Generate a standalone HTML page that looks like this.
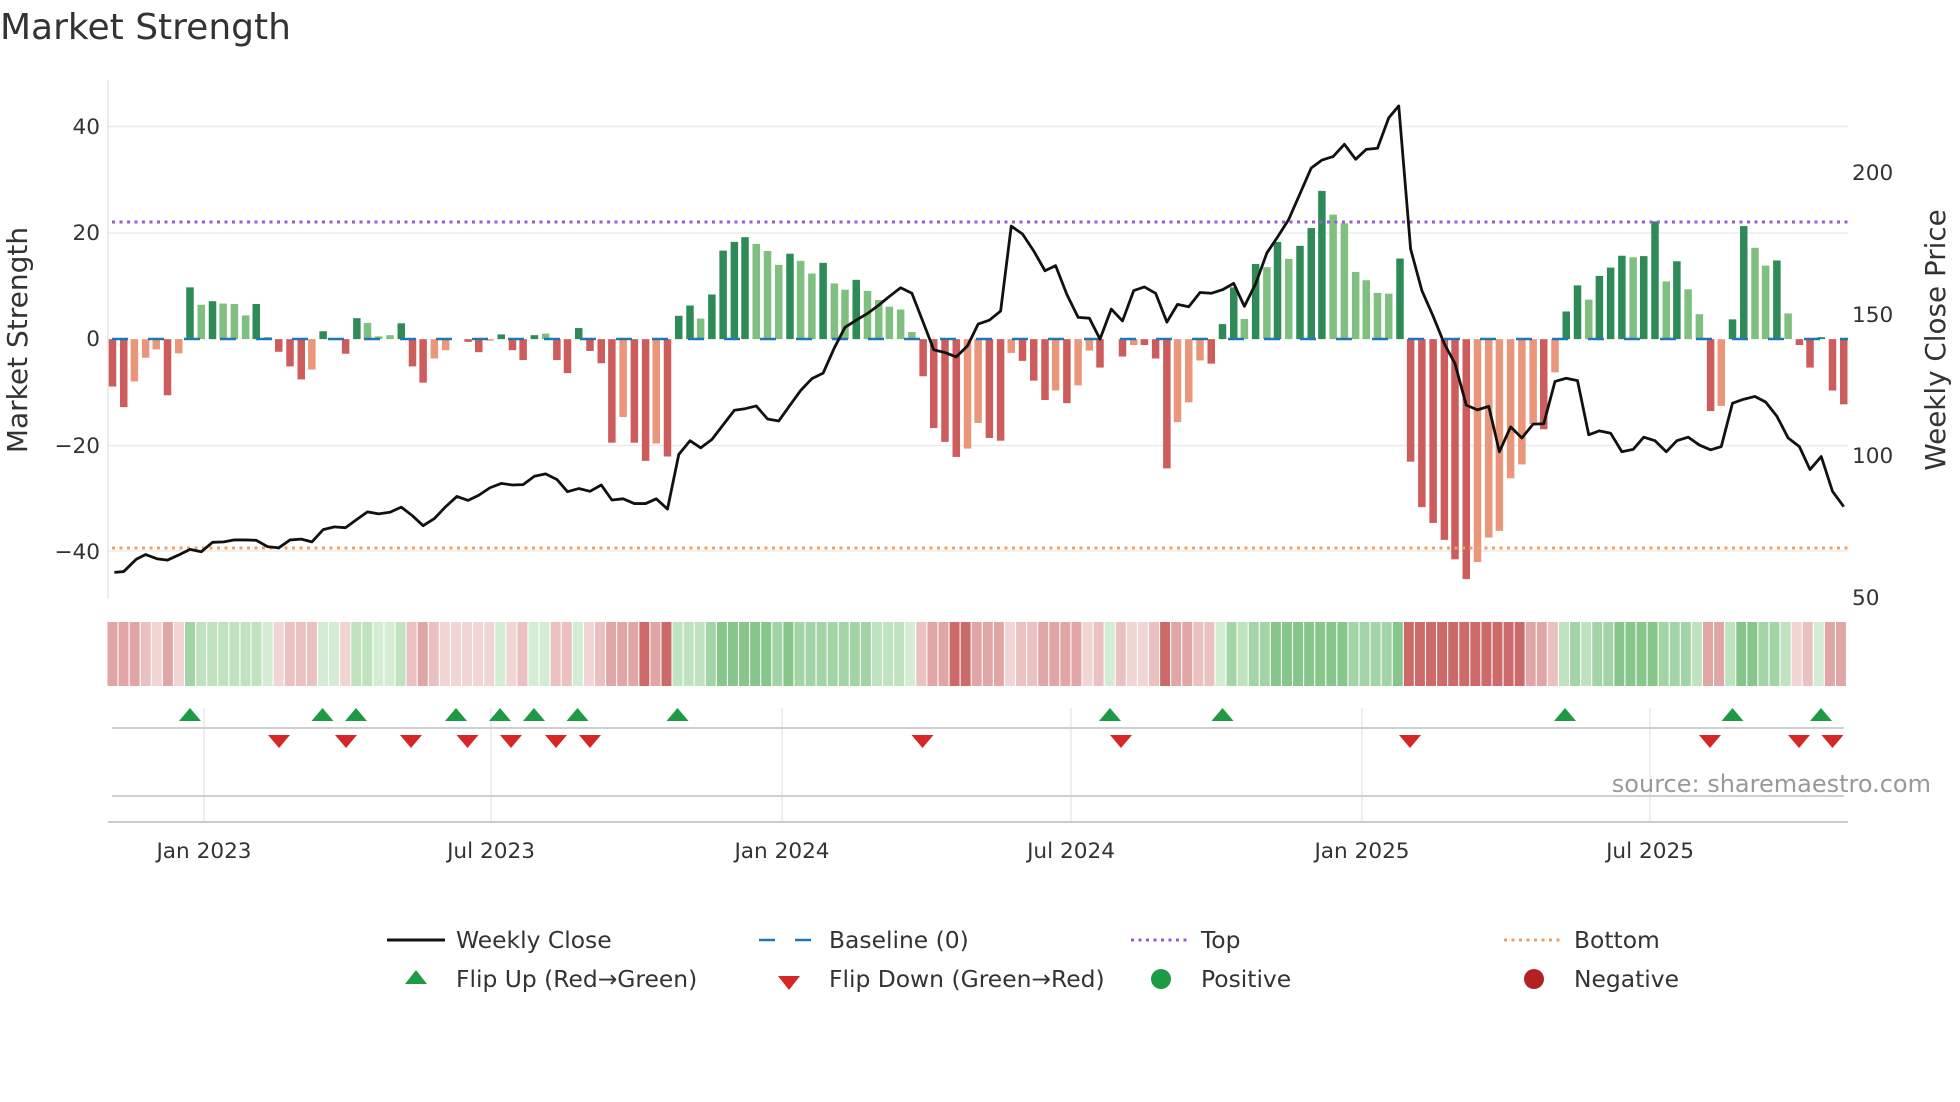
<!DOCTYPE html>
<html><head><meta charset="utf-8"><style>
html,body{margin:0;padding:0;background:#fff;}
svg{display:block;font-family:"DejaVu Sans","Liberation Sans",sans-serif;}
.d{fill:#2e8b57}.l{fill:#7fbf7f}.r{fill:#cd5c5c}.o{fill:#e9967a}
.g1{fill:#d3ecd3}.g2{fill:#bfe2bf}.g3{fill:#a3d4a5}.g4{fill:#86c68a}
.r1{fill:#f1d4d4}.r2{fill:#eac0c0}.r3{fill:#e0a5a5}.r4{fill:#cc6a6a}
.tk{font-size:21.6px;fill:#333}
.lg{font-size:23.4px;fill:#333}
</style></head><body>
<svg width="1960" height="1102" viewBox="0 0 1960 1102" xmlns="http://www.w3.org/2000/svg">
<text x="0" y="39" font-size="36" fill="#333">Market Strength</text>
<g stroke="#ebebeb" stroke-width="1.5">
<line x1="108" y1="126.5" x2="1848" y2="126.5"/>
<line x1="108" y1="233" x2="1848" y2="233"/>
<line x1="108" y1="445.5" x2="1848" y2="445.5"/>
<line x1="108" y1="551" x2="1848" y2="551"/>
</g>
<line x1="108" y1="80" x2="108" y2="599" stroke="#e6e6e6" stroke-width="1.5"/>
<g class="tk" text-anchor="end">
<text x="100" y="134">40</text>
<text x="100" y="240">20</text>
<text x="100" y="346">0</text>
<text x="100" y="453">−20</text>
<text x="100" y="559">−40</text>
</g>
<g class="tk">
<text x="1852" y="180">200</text>
<text x="1852" y="322">150</text>
<text x="1852" y="463">100</text>
<text x="1852" y="605">50</text>
</g>
<text transform="translate(27,340) rotate(-90)" text-anchor="middle" font-size="28" fill="#333">Market Strength</text>
<text transform="translate(1945,340) rotate(-90)" text-anchor="middle" font-size="27.8" fill="#333">Weekly Close Price</text>
<g transform="scale(0.625,0.39526)">
<rect class="r" x="174" y="858" width="12" height="120"/>
<rect class="r" x="192" y="858" width="12" height="172"/>
<rect class="o" x="209" y="858" width="12" height="107"/>
<rect class="o" x="227" y="858" width="12" height="47"/>
<rect class="o" x="244" y="858" width="12" height="26"/>
<rect class="r" x="262" y="858" width="12" height="142"/>
<rect class="o" x="280" y="858" width="12" height="36"/>
<rect class="d" x="298" y="727" width="12" height="131"/>
<rect class="l" x="316" y="771" width="12" height="87"/>
<rect class="d" x="334" y="762" width="12" height="96"/>
<rect class="l" x="351" y="768" width="12" height="90"/>
<rect class="l" x="369" y="769" width="12" height="89"/>
<rect class="l" x="387" y="798" width="12" height="60"/>
<rect class="d" x="404" y="769" width="12" height="89"/>
<rect class="l" x="422" y="853" width="12" height="5"/>
<rect class="r" x="440" y="858" width="12" height="32"/>
<rect class="r" x="458" y="858" width="12" height="69"/>
<rect class="r" x="476" y="858" width="12" height="102"/>
<rect class="o" x="493" y="858" width="12" height="77"/>
<rect class="d" x="511" y="838" width="12" height="20"/>
<rect class="r" x="547" y="858" width="12" height="37"/>
<rect class="d" x="565" y="805" width="12" height="53"/>
<rect class="l" x="582" y="817" width="12" height="41"/>
<rect class="l" x="600" y="851" width="12" height="7"/>
<rect class="l" x="618" y="848" width="12" height="10"/>
<rect class="d" x="636" y="818" width="12" height="40"/>
<rect class="r" x="654" y="858" width="12" height="69"/>
<rect class="r" x="671" y="858" width="12" height="110"/>
<rect class="o" x="689" y="858" width="12" height="49"/>
<rect class="o" x="707" y="858" width="12" height="28"/>
<rect class="r" x="743" y="858" width="12" height="7"/>
<rect class="r" x="760" y="858" width="12" height="33"/>
<rect class="o" x="778" y="858" width="12" height="4"/>
<rect class="d" x="796" y="846" width="12" height="12"/>
<rect class="r" x="814" y="858" width="12" height="28"/>
<rect class="r" x="831" y="858" width="12" height="53"/>
<rect class="d" x="849" y="848" width="12" height="10"/>
<rect class="l" x="867" y="844" width="12" height="14"/>
<rect class="r" x="885" y="858" width="12" height="53"/>
<rect class="r" x="902" y="858" width="12" height="86"/>
<rect class="d" x="920" y="830" width="12" height="28"/>
<rect class="r" x="938" y="858" width="12" height="30"/>
<rect class="r" x="956" y="858" width="12" height="61"/>
<rect class="r" x="973" y="858" width="12" height="262"/>
<rect class="o" x="991" y="858" width="12" height="197"/>
<rect class="r" x="1009" y="858" width="12" height="262"/>
<rect class="r" x="1027" y="858" width="12" height="308"/>
<rect class="o" x="1044" y="858" width="12" height="264"/>
<rect class="r" x="1062" y="858" width="12" height="297"/>
<rect class="d" x="1080" y="799" width="12" height="59"/>
<rect class="d" x="1098" y="773" width="12" height="85"/>
<rect class="l" x="1115" y="806" width="12" height="52"/>
<rect class="d" x="1133" y="745" width="12" height="113"/>
<rect class="d" x="1151" y="634" width="12" height="224"/>
<rect class="d" x="1169" y="612" width="12" height="246"/>
<rect class="d" x="1186" y="600" width="12" height="258"/>
<rect class="l" x="1204" y="617" width="12" height="241"/>
<rect class="l" x="1222" y="635" width="12" height="223"/>
<rect class="l" x="1240" y="670" width="12" height="188"/>
<rect class="d" x="1258" y="642" width="12" height="216"/>
<rect class="l" x="1275" y="660" width="12" height="198"/>
<rect class="l" x="1293" y="692" width="12" height="166"/>
<rect class="d" x="1311" y="665" width="12" height="193"/>
<rect class="l" x="1329" y="717" width="12" height="141"/>
<rect class="l" x="1346" y="733" width="12" height="125"/>
<rect class="d" x="1364" y="708" width="12" height="150"/>
<rect class="l" x="1382" y="736" width="12" height="122"/>
<rect class="l" x="1400" y="759" width="12" height="99"/>
<rect class="l" x="1417" y="776" width="12" height="82"/>
<rect class="l" x="1435" y="783" width="12" height="75"/>
<rect class="l" x="1453" y="840" width="12" height="18"/>
<rect class="r" x="1471" y="858" width="12" height="94"/>
<rect class="r" x="1488" y="858" width="12" height="225"/>
<rect class="r" x="1506" y="858" width="12" height="260"/>
<rect class="r" x="1524" y="858" width="12" height="298"/>
<rect class="o" x="1542" y="858" width="12" height="277"/>
<rect class="o" x="1559" y="858" width="12" height="212"/>
<rect class="r" x="1577" y="858" width="12" height="250"/>
<rect class="r" x="1595" y="858" width="12" height="257"/>
<rect class="o" x="1612" y="858" width="12" height="35"/>
<rect class="r" x="1630" y="858" width="12" height="55"/>
<rect class="r" x="1648" y="858" width="12" height="105"/>
<rect class="r" x="1666" y="858" width="12" height="154"/>
<rect class="o" x="1683" y="858" width="12" height="130"/>
<rect class="r" x="1701" y="858" width="12" height="162"/>
<rect class="o" x="1719" y="858" width="12" height="117"/>
<rect class="o" x="1737" y="858" width="12" height="29"/>
<rect class="r" x="1754" y="858" width="12" height="72"/>
<rect class="r" x="1790" y="858" width="12" height="44"/>
<rect class="o" x="1808" y="858" width="12" height="15"/>
<rect class="r" x="1825" y="858" width="12" height="15"/>
<rect class="r" x="1843" y="858" width="12" height="49"/>
<rect class="r" x="1861" y="858" width="12" height="327"/>
<rect class="o" x="1878" y="858" width="12" height="210"/>
<rect class="o" x="1896" y="858" width="12" height="160"/>
<rect class="o" x="1914" y="858" width="12" height="54"/>
<rect class="r" x="1932" y="858" width="12" height="62"/>
<rect class="d" x="1950" y="820" width="12" height="38"/>
<rect class="d" x="1968" y="727" width="12" height="131"/>
<rect class="l" x="1985" y="807" width="12" height="51"/>
<rect class="d" x="2003" y="668" width="12" height="190"/>
<rect class="l" x="2021" y="676" width="12" height="182"/>
<rect class="d" x="2038" y="612" width="12" height="246"/>
<rect class="l" x="2056" y="655" width="12" height="203"/>
<rect class="d" x="2074" y="622" width="12" height="236"/>
<rect class="d" x="2092" y="577" width="12" height="281"/>
<rect class="d" x="2109" y="483" width="12" height="375"/>
<rect class="l" x="2127" y="543" width="12" height="315"/>
<rect class="l" x="2145" y="565" width="12" height="293"/>
<rect class="l" x="2163" y="688" width="12" height="170"/>
<rect class="l" x="2180" y="709" width="12" height="149"/>
<rect class="l" x="2198" y="741" width="12" height="117"/>
<rect class="l" x="2216" y="743" width="12" height="115"/>
<rect class="d" x="2234" y="654" width="12" height="204"/>
<rect class="r" x="2251" y="858" width="12" height="310"/>
<rect class="r" x="2269" y="858" width="12" height="425"/>
<rect class="r" x="2287" y="858" width="12" height="465"/>
<rect class="r" x="2305" y="858" width="12" height="508"/>
<rect class="r" x="2322" y="858" width="12" height="557"/>
<rect class="r" x="2340" y="858" width="12" height="607"/>
<rect class="o" x="2358" y="858" width="12" height="564"/>
<rect class="o" x="2376" y="858" width="12" height="502"/>
<rect class="o" x="2393" y="858" width="12" height="485"/>
<rect class="o" x="2411" y="858" width="12" height="352"/>
<rect class="o" x="2429" y="858" width="12" height="317"/>
<rect class="o" x="2447" y="858" width="12" height="215"/>
<rect class="r" x="2464" y="858" width="12" height="228"/>
<rect class="o" x="2482" y="858" width="12" height="84"/>
<rect class="d" x="2500" y="788" width="12" height="70"/>
<rect class="d" x="2518" y="722" width="12" height="136"/>
<rect class="l" x="2536" y="758" width="12" height="100"/>
<rect class="d" x="2553" y="698" width="12" height="160"/>
<rect class="d" x="2571" y="677" width="12" height="181"/>
<rect class="d" x="2589" y="647" width="12" height="211"/>
<rect class="l" x="2607" y="651" width="12" height="207"/>
<rect class="d" x="2624" y="648" width="12" height="210"/>
<rect class="d" x="2642" y="560" width="12" height="298"/>
<rect class="l" x="2660" y="712" width="12" height="146"/>
<rect class="d" x="2677" y="661" width="12" height="197"/>
<rect class="l" x="2695" y="732" width="12" height="126"/>
<rect class="l" x="2713" y="795" width="12" height="63"/>
<rect class="r" x="2731" y="858" width="12" height="182"/>
<rect class="o" x="2748" y="858" width="12" height="169"/>
<rect class="d" x="2766" y="808" width="12" height="50"/>
<rect class="d" x="2784" y="572" width="12" height="286"/>
<rect class="l" x="2802" y="627" width="12" height="231"/>
<rect class="l" x="2819" y="672" width="12" height="186"/>
<rect class="d" x="2837" y="659" width="12" height="199"/>
<rect class="l" x="2855" y="793" width="12" height="65"/>
<rect class="r" x="2873" y="858" width="12" height="15"/>
<rect class="r" x="2890" y="858" width="12" height="72"/>
<rect class="d" x="2908" y="853" width="12" height="5"/>
<rect class="r" x="2926" y="858" width="12" height="130"/>
<rect class="r" x="2944" y="858" width="12" height="165"/>
</g>
<line x1="112" y1="339" x2="1848" y2="339" stroke="#1f77b4" stroke-width="2.5" stroke-dasharray="16 20"/>
<line x1="112" y1="222" x2="1848" y2="222" stroke="#9b59d6" stroke-width="3" stroke-dasharray="3 4.5"/>
<line x1="112" y1="548" x2="1848" y2="548" stroke="#f0a060" stroke-width="3" stroke-dasharray="3 4.5"/>
<g transform="scale(0.625,0.39526)">
<polyline fill="none" stroke="#111" stroke-width="2.8" vector-effect="non-scaling-stroke" stroke-linejoin="round" points="183,1448 198,1446 218,1415 233,1403 252,1414 268,1417 286,1404 304,1390 322,1396 340,1372 358,1371 375,1366 393,1366 410,1367 428,1383 446,1386 464,1366 482,1364 499,1371 517,1340 535,1333 553,1335 571,1314 588,1295 606,1300 624,1296 642,1283 660,1305 677,1330 695,1312 713,1282 731,1256 749,1266 766,1253 784,1234 802,1223 820,1227 837,1226 855,1205 873,1199 891,1213 908,1244 926,1236 944,1243 962,1227 979,1265 997,1262 1015,1274 1033,1274 1050,1262 1068,1288 1086,1150 1104,1115 1121,1133 1139,1112 1157,1075 1175,1038 1192,1034 1210,1027 1228,1060 1246,1065 1264,1025 1281,988 1299,958 1317,944 1335,880 1352,828 1370,810 1388,793 1406,772 1423,750 1441,728 1459,742 1477,815 1494,885 1512,892 1530,903 1548,875 1565,820 1583,810 1601,787 1618,572 1636,592 1654,635 1672,685 1689,672 1707,745 1725,803 1743,805 1760,858 1778,782 1796,812 1814,735 1831,726 1849,742 1867,815 1884,770 1902,776 1920,740 1938,742 1956,733 1974,717 1991,775 2009,718 2027,640 2044,600 2062,555 2080,490 2098,425 2115,405 2133,396 2151,365 2169,403 2186,378 2204,375 2222,298 2238,268 2257,630 2275,735 2293,800 2311,870 2328,920 2346,1025 2364,1037 2382,1028 2399,1143 2417,1080 2435,1108 2453,1073 2470,1072 2488,965 2506,957 2524,963 2542,1100 2559,1090 2577,1096 2595,1143 2613,1137 2630,1106 2648,1115 2666,1143 2683,1115 2701,1106 2719,1126 2737,1138 2754,1130 2772,1020 2790,1010 2808,1003 2825,1017 2843,1053 2861,1108 2879,1130 2896,1188 2914,1155 2932,1243 2950,1282"/>
</g>
<g transform="translate(107.5,622) scale(11.08,1)">
<rect class="r3" x="0" width="0.9" height="64"/><rect class="r3" x="1" width="0.9" height="64"/><rect class="r3" x="2" width="0.9" height="64"/><rect class="r2" x="3" width="0.9" height="64"/><rect class="r1" x="4" width="0.9" height="64"/><rect class="r3" x="5" width="0.9" height="64"/><rect class="r1" x="6" width="0.9" height="64"/><rect class="g3" x="7" width="0.9" height="64"/><rect class="g2" x="8" width="0.9" height="64"/><rect class="g2" x="9" width="0.9" height="64"/>
<rect class="g2" x="10" width="0.9" height="64"/><rect class="g2" x="11" width="0.9" height="64"/><rect class="g2" x="12" width="0.9" height="64"/><rect class="g2" x="13" width="0.9" height="64"/><rect class="g1" x="14" width="0.9" height="64"/><rect class="r1" x="15" width="0.9" height="64"/><rect class="r2" x="16" width="0.9" height="64"/><rect class="r2" x="17" width="0.9" height="64"/><rect class="r2" x="18" width="0.9" height="64"/><rect class="g1" x="19" width="0.9" height="64"/>
<rect class="g1" x="20" width="0.9" height="64"/><rect class="r1" x="21" width="0.9" height="64"/><rect class="g2" x="22" width="0.9" height="64"/><rect class="g2" x="23" width="0.9" height="64"/><rect class="g1" x="24" width="0.9" height="64"/><rect class="g1" x="25" width="0.9" height="64"/><rect class="g2" x="26" width="0.9" height="64"/><rect class="r2" x="27" width="0.9" height="64"/><rect class="r3" x="28" width="0.9" height="64"/><rect class="r2" x="29" width="0.9" height="64"/>
<rect class="r1" x="30" width="0.9" height="64"/><rect class="r1" x="31" width="0.9" height="64"/><rect class="r1" x="32" width="0.9" height="64"/><rect class="r1" x="33" width="0.9" height="64"/><rect class="r1" x="34" width="0.9" height="64"/><rect class="g1" x="35" width="0.9" height="64"/><rect class="r1" x="36" width="0.9" height="64"/><rect class="r2" x="37" width="0.9" height="64"/><rect class="g1" x="38" width="0.9" height="64"/><rect class="g1" x="39" width="0.9" height="64"/>
<rect class="r2" x="40" width="0.9" height="64"/><rect class="r2" x="41" width="0.9" height="64"/><rect class="g1" x="42" width="0.9" height="64"/><rect class="r1" x="43" width="0.9" height="64"/><rect class="r2" x="44" width="0.9" height="64"/><rect class="r3" x="45" width="0.9" height="64"/><rect class="r3" x="46" width="0.9" height="64"/><rect class="r3" x="47" width="0.9" height="64"/><rect class="r4" x="48" width="0.9" height="64"/><rect class="r3" x="49" width="0.9" height="64"/>
<rect class="r4" x="50" width="0.9" height="64"/><rect class="g2" x="51" width="0.9" height="64"/><rect class="g2" x="52" width="0.9" height="64"/><rect class="g2" x="53" width="0.9" height="64"/><rect class="g3" x="54" width="0.9" height="64"/><rect class="g4" x="55" width="0.9" height="64"/><rect class="g4" x="56" width="0.9" height="64"/><rect class="g4" x="57" width="0.9" height="64"/><rect class="g4" x="58" width="0.9" height="64"/><rect class="g4" x="59" width="0.9" height="64"/>
<rect class="g3" x="60" width="0.9" height="64"/><rect class="g4" x="61" width="0.9" height="64"/><rect class="g3" x="62" width="0.9" height="64"/><rect class="g3" x="63" width="0.9" height="64"/><rect class="g3" x="64" width="0.9" height="64"/><rect class="g3" x="65" width="0.9" height="64"/><rect class="g3" x="66" width="0.9" height="64"/><rect class="g3" x="67" width="0.9" height="64"/><rect class="g3" x="68" width="0.9" height="64"/><rect class="g2" x="69" width="0.9" height="64"/>
<rect class="g2" x="70" width="0.9" height="64"/><rect class="g2" x="71" width="0.9" height="64"/><rect class="g1" x="72" width="0.9" height="64"/><rect class="r2" x="73" width="0.9" height="64"/><rect class="r3" x="74" width="0.9" height="64"/><rect class="r3" x="75" width="0.9" height="64"/><rect class="r4" x="76" width="0.9" height="64"/><rect class="r4" x="77" width="0.9" height="64"/><rect class="r3" x="78" width="0.9" height="64"/><rect class="r3" x="79" width="0.9" height="64"/>
<rect class="r3" x="80" width="0.9" height="64"/><rect class="r1" x="81" width="0.9" height="64"/><rect class="r2" x="82" width="0.9" height="64"/><rect class="r2" x="83" width="0.9" height="64"/><rect class="r3" x="84" width="0.9" height="64"/><rect class="r3" x="85" width="0.9" height="64"/><rect class="r3" x="86" width="0.9" height="64"/><rect class="r3" x="87" width="0.9" height="64"/><rect class="r1" x="88" width="0.9" height="64"/><rect class="r2" x="89" width="0.9" height="64"/>
<rect class="g1" x="90" width="0.9" height="64"/><rect class="r2" x="91" width="0.9" height="64"/><rect class="r1" x="92" width="0.9" height="64"/><rect class="r1" x="93" width="0.9" height="64"/><rect class="r2" x="94" width="0.9" height="64"/><rect class="r4" x="95" width="0.9" height="64"/><rect class="r3" x="96" width="0.9" height="64"/><rect class="r3" x="97" width="0.9" height="64"/><rect class="r2" x="98" width="0.9" height="64"/><rect class="r2" x="99" width="0.9" height="64"/>
<rect class="g1" x="100" width="0.9" height="64"/><rect class="g3" x="101" width="0.9" height="64"/><rect class="g2" x="102" width="0.9" height="64"/><rect class="g3" x="103" width="0.9" height="64"/><rect class="g3" x="104" width="0.9" height="64"/><rect class="g4" x="105" width="0.9" height="64"/><rect class="g4" x="106" width="0.9" height="64"/><rect class="g4" x="107" width="0.9" height="64"/><rect class="g4" x="108" width="0.9" height="64"/><rect class="g4" x="109" width="0.9" height="64"/>
<rect class="g4" x="110" width="0.9" height="64"/><rect class="g4" x="111" width="0.9" height="64"/><rect class="g3" x="112" width="0.9" height="64"/><rect class="g3" x="113" width="0.9" height="64"/><rect class="g3" x="114" width="0.9" height="64"/><rect class="g3" x="115" width="0.9" height="64"/><rect class="g4" x="116" width="0.9" height="64"/><rect class="r4" x="117" width="0.9" height="64"/><rect class="r4" x="118" width="0.9" height="64"/><rect class="r4" x="119" width="0.9" height="64"/>
<rect class="r4" x="120" width="0.9" height="64"/><rect class="r4" x="121" width="0.9" height="64"/><rect class="r4" x="122" width="0.9" height="64"/><rect class="r4" x="123" width="0.9" height="64"/><rect class="r4" x="124" width="0.9" height="64"/><rect class="r4" x="125" width="0.9" height="64"/><rect class="r4" x="126" width="0.9" height="64"/><rect class="r4" x="127" width="0.9" height="64"/><rect class="r3" x="128" width="0.9" height="64"/><rect class="r3" x="129" width="0.9" height="64"/>
<rect class="r2" x="130" width="0.9" height="64"/><rect class="g2" x="131" width="0.9" height="64"/><rect class="g3" x="132" width="0.9" height="64"/><rect class="g2" x="133" width="0.9" height="64"/><rect class="g3" x="134" width="0.9" height="64"/><rect class="g3" x="135" width="0.9" height="64"/><rect class="g4" x="136" width="0.9" height="64"/><rect class="g4" x="137" width="0.9" height="64"/><rect class="g4" x="138" width="0.9" height="64"/><rect class="g4" x="139" width="0.9" height="64"/>
<rect class="g3" x="140" width="0.9" height="64"/><rect class="g3" x="141" width="0.9" height="64"/><rect class="g3" x="142" width="0.9" height="64"/><rect class="g2" x="143" width="0.9" height="64"/><rect class="r3" x="144" width="0.9" height="64"/><rect class="r3" x="145" width="0.9" height="64"/><rect class="g2" x="146" width="0.9" height="64"/><rect class="g4" x="147" width="0.9" height="64"/><rect class="g4" x="148" width="0.9" height="64"/><rect class="g3" x="149" width="0.9" height="64"/>
<rect class="g3" x="150" width="0.9" height="64"/><rect class="g2" x="151" width="0.9" height="64"/><rect class="r1" x="152" width="0.9" height="64"/><rect class="r2" x="153" width="0.9" height="64"/><rect class="g1" x="154" width="0.9" height="64"/><rect class="r3" x="155" width="0.9" height="64"/><rect class="r3" x="156" width="0.9" height="64"/>
</g>
<g stroke="#e8e8e8" stroke-width="1.5">
<line x1="204" y1="708" x2="204" y2="822"/><line x1="491" y1="708" x2="491" y2="822"/><line x1="782" y1="708" x2="782" y2="822"/><line x1="1071" y1="708" x2="1071" y2="822"/><line x1="1362" y1="708" x2="1362" y2="822"/><line x1="1650" y1="708" x2="1650" y2="822"/>
</g>
<line x1="112" y1="728" x2="1844" y2="728" stroke="#cfcfcf" stroke-width="2"/>
<line x1="112" y1="796" x2="1844" y2="796" stroke="#cfcfcf" stroke-width="2"/>
<line x1="108" y1="822" x2="1848" y2="822" stroke="#cccccc" stroke-width="2"/>
<g fill="#1e9a45">
<path d="M190 708 l-11 13 h22z"/><path d="M322.5 708 l-11 13 h22z"/><path d="M356 708 l-11 13 h22z"/><path d="M456 708 l-11 13 h22z"/><path d="M500 708 l-11 13 h22z"/><path d="M534 708 l-11 13 h22z"/><path d="M577.5 708 l-11 13 h22z"/><path d="M677.5 708 l-11 13 h22z"/><path d="M1110 708 l-11 13 h22z"/><path d="M1222.5 708 l-11 13 h22z"/><path d="M1565 708 l-11 13 h22z"/><path d="M1732.5 708 l-11 13 h22z"/><path d="M1821 708 l-11 13 h22z"/>
</g>
<g fill="#d62728">
<path d="M279 748 l-11 -13 h22z"/><path d="M346 748 l-11 -13 h22z"/><path d="M411 748 l-11 -13 h22z"/><path d="M467.5 748 l-11 -13 h22z"/><path d="M511 748 l-11 -13 h22z"/><path d="M556 748 l-11 -13 h22z"/><path d="M590 748 l-11 -13 h22z"/><path d="M922.5 748 l-11 -13 h22z"/><path d="M1121 748 l-11 -13 h22z"/><path d="M1410 748 l-11 -13 h22z"/><path d="M1710 748 l-11 -13 h22z"/><path d="M1799 748 l-11 -13 h22z"/><path d="M1832.5 748 l-11 -13 h22z"/>
</g>
<text x="1931" y="792" text-anchor="end" font-size="24" fill="#999">source: sharemaestro.com</text>
<g class="tk" text-anchor="middle">
<text x="204" y="858">Jan 2023</text><text x="491" y="858">Jul 2023</text><text x="782" y="858">Jan 2024</text><text x="1071" y="858">Jul 2024</text><text x="1362" y="858">Jan 2025</text><text x="1650" y="858">Jul 2025</text>
</g>
<line x1="387" y1="940" x2="445" y2="940" stroke="#111" stroke-width="3"/>
<text class="lg" x="456" y="948">Weekly Close</text>
<line x1="759" y1="940" x2="815" y2="940" stroke="#1f77b4" stroke-width="2.5" stroke-dasharray="16 20"/>
<text class="lg" x="829" y="948">Baseline (0)</text>
<line x1="1131" y1="940" x2="1187" y2="940" stroke="#9b59d6" stroke-width="3" stroke-dasharray="3 4.5"/>
<text class="lg" x="1201" y="948">Top</text>
<line x1="1504" y1="940" x2="1560" y2="940" stroke="#f0a060" stroke-width="3" stroke-dasharray="3 4.5"/>
<text class="lg" x="1574" y="948">Bottom</text>
<path d="M416 970 l-11 14 h22z" fill="#1e9a45"/>
<text class="lg" x="456" y="987">Flip Up (Red→Green)</text>
<path d="M789 990 l-11 -14 h22z" fill="#d62728"/>
<text class="lg" x="829" y="987">Flip Down (Green→Red)</text>
<circle cx="1161" cy="979" r="10" fill="#1e9a45"/>
<text class="lg" x="1201" y="987">Positive</text>
<circle cx="1534" cy="979" r="10" fill="#b22222"/>
<text class="lg" x="1574" y="987">Negative</text>
</svg>
</body></html>
